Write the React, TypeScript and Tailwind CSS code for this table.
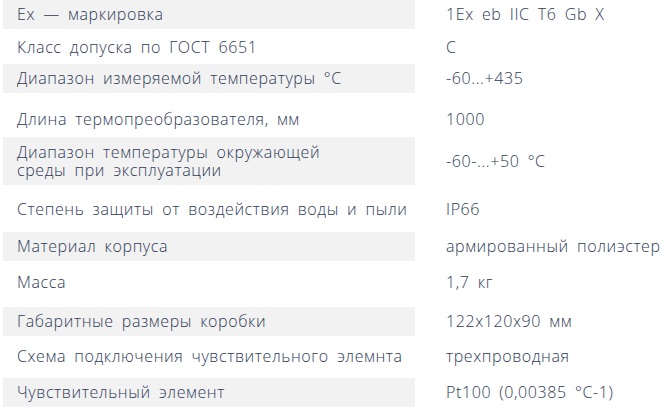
import React from 'react'

// строки таблицы характеристик
const rows: { label: React.ReactNode; value: string; gray: boolean; cls: string }[] = [
  { label: 'Ex — маркировка', value: '1Ex eb IIC T6 Gb X', gray: true, cls: 'mt-0 h-[29px]' },
  { label: 'Класс допуска по ГОСТ 6651', value: 'C', gray: false, cls: 'mt-[4px] h-[29px]' },
  { label: 'Диапазон измеряемой температуры °C', value: '-60...+435', gray: true, cls: 'mt-[2px] h-[29px]' },
  { label: 'Длина термопреобразователя, мм', value: '1000', gray: false, cls: 'mt-[12px] h-[29px]' },
  {
    label: (
      <div className="flex flex-col leading-[18px]">
        <span>Диапазон температуры окружающей</span>
        <span>среды при эксплуатации</span>
      </div>
    ),
    value: '-60-...+50 °C',
    gray: true,
    cls: 'mt-[3px] h-[48px]',
  },
  { label: 'Степень защиты от воздействия воды и пыли', value: 'IP66', gray: false, cls: 'mt-[10px] h-[29px]' },
  { label: 'Материал корпуса', value: 'армированный полиэстер', gray: true, cls: 'mt-[8px] h-[29px]' },
  { label: 'Масса', value: '1,7 кг', gray: false, cls: 'mt-[7px] h-[29px]' },
  { label: 'Габаритные размеры коробки', value: '122x120x90 мм', gray: true, cls: 'mt-[10px] h-[29px]' },
  { label: 'Схема подключения чувствительного элемнта', value: 'трехпроводная', gray: false, cls: 'mt-[6px] h-[29px]' },
  { label: 'Чувствительный элемент', value: 'Pt100 (0,00385 °C-1)', gray: true, cls: 'mt-[7px] h-[29px]' },
]

function App() {
  return (
    <div
      className="w-[667px] h-[409px] overflow-hidden bg-white text-[#2f3b57] text-[16px] font-light leading-[17px] tracking-[0.6px] [word-spacing:3.5px]"
      style={{ fontFamily: '"Open Sans", "Noto Sans", sans-serif' }}
    >
      {rows.map((r, i) => (
        <div key={i} className={`flex ${r.cls}`}>
          <div className={`ml-[3px] w-[412px] flex items-center pl-[14px] ${r.gray ? 'bg-[#f2f2f2]' : ''}`}>
            {r.label}
          </div>
          <div className="pl-[31px] flex items-center whitespace-nowrap">{r.value}</div>
        </div>
      ))}
    </div>
  )
}

export default App
